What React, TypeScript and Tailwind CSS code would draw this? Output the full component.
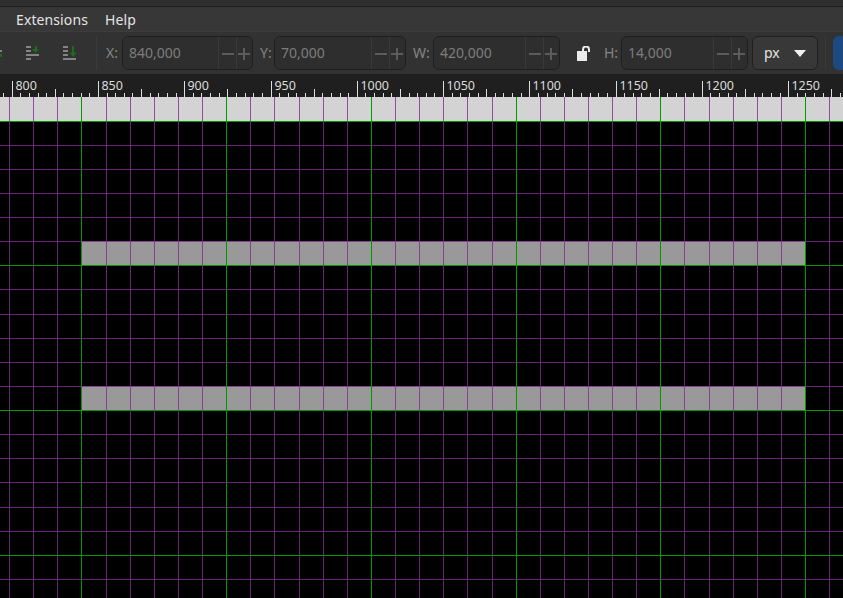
import React from "react";

const FONT = "font-['Noto_Sans','Open_Sans',sans-serif]";

function Field({ value, width, labelText, labelWidth, ml }: { value: string; width: string; labelText: string; labelWidth: string; ml: string }) {
  return (
    <div className={`flex flex-none items-center ${ml}`}>
      <span className={`${labelWidth} pb-[2px] text-[14px] text-[#858585]`}>{labelText}</span>
      <div className={`${width} flex h-[34px] items-stretch rounded-[6px] border border-[#1f1f1f] bg-[#2e2e2e]`}>
        <span className="flex-1 self-center pb-[2px] pl-[6px] text-[14px] text-[#7d7d7d]">{value}</span>
        <div className="flex w-[18px] items-center justify-center border-l border-[#3a3a3a]">
          <svg width="13" height="13" viewBox="0 0 13 13" shapeRendering="crispEdges">
            <rect x="0.5" y="5.5" width="12" height="2" fill="#5c5c5c" />
          </svg>
        </div>
        <div className="flex w-[16px] items-center justify-center border-l border-[#3a3a3a] pr-[2px]">
          <svg width="13" height="13" viewBox="0 0 13 13" className="flex-none" shapeRendering="crispEdges">
            <rect x="0.5" y="5.5" width="12" height="2" fill="#5c5c5c" />
            <rect x="5.5" y="0.5" width="2" height="12" fill="#5c5c5c" />
          </svg>
        </div>
      </div>
    </div>
  );
}

function AlignIcon({ long }: { long: boolean }) {
  const g = "#848484";
  return (
    <svg width="13" height="15" viewBox="0 0 13 15" shapeRendering="crispEdges">
      <rect x="0" y="0" width="5" height="2" fill={g} />
      <rect x="0" y="4" width="5" height="2" fill={g} />
      {long ? (
        <>
          <rect x="0" y="8" width="5" height="2" fill={g} />
          <rect x="0" y="12" width="13" height="2" fill={g} />
          <rect x="9" y="0" width="2" height="7" fill="#1d6b1d" />
          <path d="M6.5 6.5h7l-3.5 4.5z" fill="#1d6b1d" shapeRendering="auto" />
        </>
      ) : (
        <>
          <rect x="0" y="8" width="13" height="2" fill={g} />
          <rect x="0" y="12" width="5" height="2" fill={g} />
          <rect x="9" y="0" width="2" height="3" fill="#1d6b1d" />
          <path d="M6 3h7l-3.5 4z" fill="#1d6b1d" shapeRendering="auto" />
        </>
      )}
    </svg>
  );
}

function Ruler() {
  const x0 = 12.2;
  const step = 8.627;
  const ticks = [];
  for (let i = -1; i < 97; i++) {
    const x = Math.floor(x0 + i * step);
    const m = ((i % 10) + 10) % 10;
    const top = m === 0 ? 7 : m === 5 ? 15 : 19;
    ticks.push(<rect key={i} x={x} y={top} width="1" height={23 - top} fill="#dedede" />);
  }
  const labels = [800, 850, 900, 950, 1000, 1050, 1100, 1150, 1200, 1250];
  return (
    <svg width="843" height="23" className="block h-[23px] w-full flex-none bg-[#1e1f1e]">
      <g shapeRendering="crispEdges">{ticks}</g>
      {labels.map((v, i) => (
        <text key={v} x={Math.floor(x0 + i * 86.27) + 3.4} y="16" fontSize="12.5" fill="#dcdcdc" fontFamily="'Noto Sans', sans-serif">
          {v}
        </text>
      ))}
    </svg>
  );
}

function Canvas() {
  const xs = Array.from({ length: 35 }, (_, i) => Math.floor(9.6 + 24.12 * i));
  const ys = Array.from({ length: 20 }, (_, j) => Math.floor(121.1 + 24.12 * j) - 97);
  const purple = "rgba(130,42,148,0.8)";
  const green = "#009900";
  return (
    <svg width="843" height="501" className="block h-[501px] w-full flex-none bg-black" shapeRendering="crispEdges">
      <rect x="0" y="0" width="843" height="24" fill="#d3d3d3" />
      <rect x="81" y="144" width="725" height="25" fill="#999999" />
      <rect x="81" y="289" width="725" height="25" fill="#999999" />
      {ys.map((y, j) => (j % 6 !== 0 ? <rect key={y} x="0" y={y} width="843" height="1" fill={purple} /> : null))}
      {xs.map((x, i) => (i % 6 !== 3 ? <rect key={x} x={x} y="0" width="1" height="501" fill={purple} /> : null))}
      {ys.map((y, j) => (j % 6 === 0 ? <rect key={y} x="0" y={y} width="843" height="1" fill={green} /> : null))}
      {xs.map((x, i) => (i % 6 === 3 ? <rect key={x} x={x} y="0" width="1" height="501" fill={green} /> : null))}
    </svg>
  );
}

export default function App() {
  return (
    <div className={`flex h-[598px] w-[843px] flex-col overflow-hidden bg-black ${FONT}`}>
      <div className="h-[6px] flex-none bg-[#2f2f2f]" />
      <div className="h-px flex-none bg-[#1d1d1d]" />
      <div className="flex h-[25px] flex-none items-center gap-[17px] border-b border-[#3d3d3d] bg-[#373737] pl-[16px] text-[14px] tracking-[0.1px] text-[#e4e4e4]">
        <span>Extensions</span>
        <span>Help</span>
      </div>
      <div className="flex h-[42px] flex-none items-center overflow-hidden bg-[#323232]">
        <div className="w-[3px] flex-none overflow-hidden">
          <svg width="3" height="15" viewBox="0 0 3 15" shapeRendering="crispEdges">
            <rect x="0" y="4" width="2" height="2" fill="#848484" />
            <rect x="0" y="8" width="2" height="3" fill="#1d6b1d" />
          </svg>
        </div>
        <div className="ml-[23px] flex flex-none"><AlignIcon long={false} /></div>
        <div className="ml-[24px] flex flex-none"><AlignIcon long={true} /></div>
        <div className="ml-[20px] h-[34px] w-px flex-none bg-[#3a3a3a]" />
        <Field ml="ml-[9px]" labelWidth="w-[16px]" labelText="X:" value="840,000" width="w-[131px]" />
        <Field ml="ml-[7px]" labelWidth="w-[14px]" labelText="Y:" value="70,000" width="w-[132px]" />
        <Field ml="ml-[7px]" labelWidth="w-[20px]" labelText="W:" value="420,000" width="w-[127px]" />
        <div className="ml-[17px] flex flex-none">
          <svg width="14" height="15" viewBox="0 0 14 15">
            <rect x="0" y="5" width="10" height="10" fill="#ececec" shapeRendering="crispEdges" />
            <path d="M6 5V3.5a3 3 0 0 1 6 0V6" fill="none" stroke="#ececec" strokeWidth="2" />
          </svg>
        </div>
        <Field ml="ml-[13px]" labelWidth="w-[17px]" labelText="H:" value="14,000" width="w-[127px]" />
        <div className="ml-[4px] flex h-[34px] w-[66px] flex-none items-center justify-between rounded-[6px] border border-[#1f1f1f] bg-[#383838] pl-[11px] pr-[11px] text-[14px] text-[#e4e4e4]">
          <span className="pb-[2px]">px</span>
          <svg width="12" height="7" viewBox="0 0 12 7"><path d="M0 0h12L6 7z" fill="#f0f0f0" /></svg>
        </div>
        <div className="ml-[7px] h-[34px] w-px flex-none bg-[#3a3a3a]" />
        <div className="ml-[7px] h-[34px] w-[20px] flex-none rounded-[6px] bg-[#1c4a80]" />
      </div>
      <Ruler />
      <Canvas />
    </div>
  );
}
